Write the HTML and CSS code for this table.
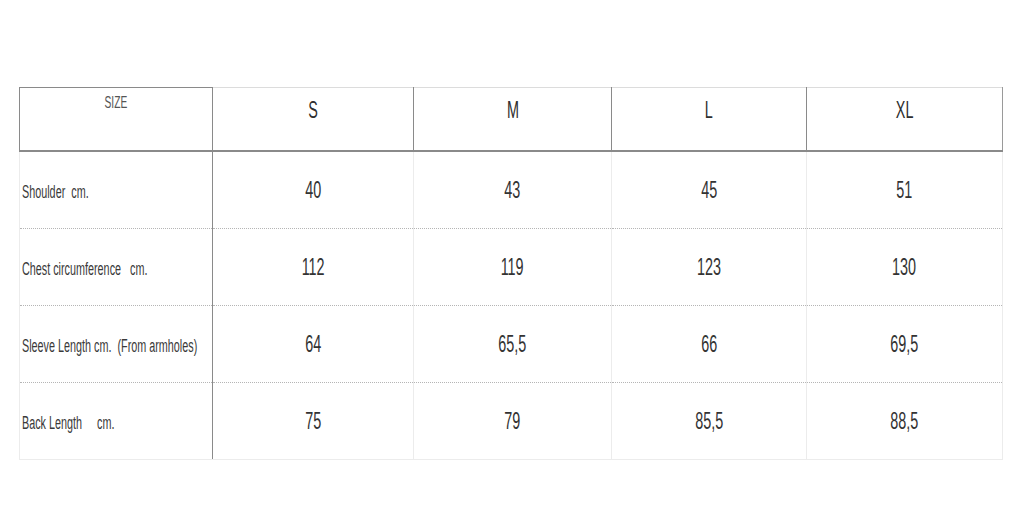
FILE: index.html
```html
<!DOCTYPE html>
<html>
<head>
<meta charset="utf-8">
<link rel="stylesheet" href="styles.css">
</head>
<body>
<table class="chart">
  <colgroup>
    <col class="c0"><col class="c1"><col class="c2"><col class="c3"><col class="c4">
  </colgroup>
  <thead>
    <tr>
      <th class="corner"><span class="t">SIZE</span></th>
      <th><span class="t">S</span></th>
      <th><span class="t">M</span></th>
      <th><span class="t">L</span></th>
      <th class="last"><span class="t">XL</span></th>
    </tr>
  </thead>
  <tbody>
    <tr>
      <td class="label"><span class="t">Shoulder&nbsp; cm.</span></td>
      <td><span class="t">40</span></td><td><span class="t">43</span></td><td><span class="t">45</span></td><td><span class="t">51</span></td>
    </tr>
    <tr>
      <td class="label"><span class="t">Chest circumference&nbsp;&nbsp; cm.</span></td>
      <td><span class="t">112</span></td><td><span class="t">119</span></td><td><span class="t">123</span></td><td><span class="t">130</span></td>
    </tr>
    <tr>
      <td class="label"><span class="t">Sleeve Length cm.&nbsp; (From armholes)</span></td>
      <td><span class="t">64</span></td><td><span class="t">65,5</span></td><td><span class="t">66</span></td><td><span class="t">69,5</span></td>
    </tr>
    <tr>
      <td class="label"><span class="t">Back Length&nbsp;&nbsp;&nbsp;&nbsp; cm.</span></td>
      <td><span class="t">75</span></td><td><span class="t">79</span></td><td><span class="t">85,5</span></td><td><span class="t">88,5</span></td>
    </tr>
  </tbody>
</table>
</body>
</html>
```
FILE: styles.css
```css
html, body {
  margin: 0;
  padding: 0;
  background: #fff;
}
body {
  font-family: "Liberation Sans", Arial, sans-serif;
  color: #333;
}
.chart {
  margin: 87px 0 0 19px;
  width: 983px;
  border-collapse: collapse;
  table-layout: fixed;
}
.c0 { width: 193px; }
.c1 { width: 201px; }
.c2 { width: 198px; }
.c3 { width: 195px; }
.c4 { width: 196px; }

.t {
  display: inline-block;
  white-space: nowrap;
  transform: scaleX(0.6);
  transform-origin: center;
}

thead th {
  height: 54px;
  padding: 0;
  vertical-align: top;
  text-align: center;
  font-weight: normal;
  border-top: 1px solid #dcdcdc;
  border-left: 1px solid #8a8a8a;
  border-right: 1px solid #8a8a8a;
  border-bottom: 2px solid #8a8a8a;
  font-size: 24px;
  line-height: 28px;
  padding-top: 8px;
  color: #2e2e2e;
}
thead th.corner {
  border-top-color: #8a8a8a;
  font-size: 17px;
  line-height: 20px;
  padding-top: 5px;
  color: #555;
}
thead th.last {
  border-right-color: #9a9a9a;
}

tbody td {
  height: 71px;
  padding: 0;
  text-align: center;
  vertical-align: middle;
  font-size: 24px;
  color: #333;
  border-left: 1px solid #ececec;
  border-right: 1px solid #ececec;
  border-bottom: 1px dotted #b5b5b5;
}
tbody tr:last-child td {
  border-bottom: 1px solid #ececec;
}
tbody td.label {
  text-align: left;
  padding: 5px 0 0 2px;
  font-size: 18px;
  color: #3a3a3a;
  border-right: 1px solid #8a8a8a;
}
tbody td.label .t {
  transform-origin: left center;
}
```
